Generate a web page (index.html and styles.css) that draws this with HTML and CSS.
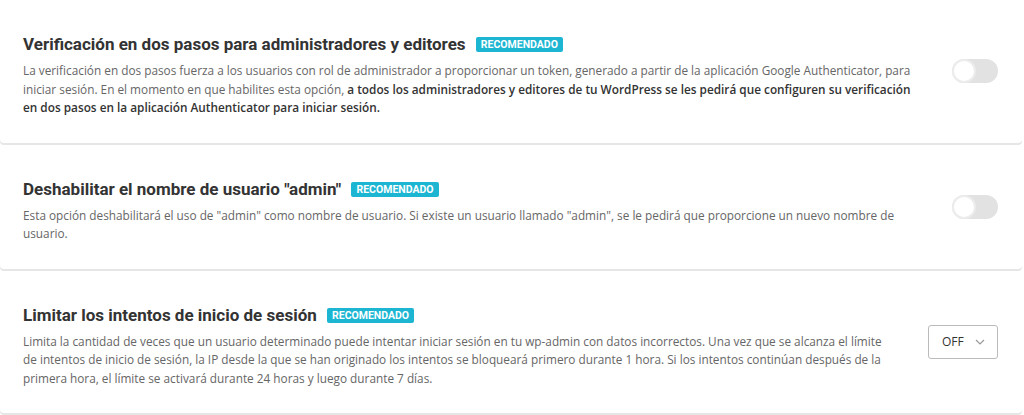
FILE: index.html
```html
<!DOCTYPE html>
<html lang="es">
<head>
    <meta charset="UTF-8">
    <meta name="viewport" content="width=device-width, initial-scale=1.0">
    <title>Seguridad - Ajustes</title>
    <link rel="stylesheet" href="styles.css">
</head>
<body>
    <div class="settings">

        <div class="box">
            <div class="box-text">
                <h3 class="box-title">Verificación en dos pasos para administradores y editores <span class="tag">Recomendado</span></h3>
                <p>La verificación en dos pasos fuerza a los usuarios con rol de administrador a proporcionar un token, generado a partir de la aplicación Google Authenticator, para iniciar sesión. En el momento en que habilites esta opción, <strong>a todos los administradores y editores de tu WordPress se les pedirá que configuren su verificación en dos pasos en la aplicación Authenticator para iniciar sesión.</strong></p>
            </div>
            <div class="box-control">
                <label class="toggle"><input type="checkbox"><span class="slider"></span></label>
            </div>
        </div>

        <div class="box">
            <div class="box-text">
                <h3 class="box-title">Deshabilitar el nombre de usuario "admin" <span class="tag">Recomendado</span></h3>
                <p>Esta opción deshabilitará el uso de "admin" como nombre de usuario. Si existe un usuario llamado "admin", se le pedirá que proporcione un nuevo nombre de usuario.</p>
            </div>
            <div class="box-control">
                <label class="toggle"><input type="checkbox"><span class="slider"></span></label>
            </div>
        </div>

        <div class="box">
            <div class="box-text">
                <h3 class="box-title">Limitar los intentos de inicio de sesión <span class="tag">Recomendado</span></h3>
                <p>Limita la cantidad de veces que un usuario determinado puede intentar iniciar sesión en tu wp-admin con datos incorrectos. Una vez que se alcanza el límite de intentos de inicio de sesión, la IP desde la que se han originado los intentos se bloqueará primero durante 1 hora. Si los intentos continúan después de la primera hora, el límite se activará durante 24 horas y luego durante 7 días.</p>
            </div>
            <div class="box-control">
                <div class="select">
                    <span>OFF</span>
                    <svg width="10" height="6" viewBox="0 0 10 6"><path d="M1 1l4 4 4-4" fill="none" stroke="#999" stroke-width="1.2"/></svg>
                </div>
            </div>
        </div>

    </div>
</body>
</html>
```

FILE: styles.css
```css
body {
    margin: 0;
    background: #fff;
    font-family: 'Open Sans', sans-serif;
    color: #666;
}
.settings {
    width: 1022px;
}
.box {
    display: flex;
    align-items: center;
    padding: 0 24px 0 23px;
    background: #fff;
    border-radius: 0 0 4px 4px;
    box-shadow: 0 2px 0 #e6e6e6;
    margin-bottom: 2px;
}
.box-text {
    flex: 1;
    padding: 33px 0 26px;
}
.box-title {
    margin: 0 0 6px;
    font-family: Roboto, sans-serif;
    font-weight: 700;
    font-size: 17px;
    line-height: 22px;
    color: #333;
}
.tag {
    display: inline-block;
    vertical-align: 2px;
    margin-left: 6px;
    padding: 0 5px;
    background: #1cb5d2;
    color: #fff;
    border-radius: 2px;
    font-size: 10.5px;
    line-height: 15px;
    text-transform: uppercase;
}
.box-text p {
    margin: 0;
    font-size: 11.8px;
    line-height: 18.5px;
    color: #666;
}
.box-text strong {
    color: #333;
    font-weight: 600;
}
.box-control {
    flex: none;
    margin-left: 36px;
}
.toggle {
    position: relative;
    display: block;
    width: 46px;
    height: 24px;
}
.toggle input {
    display: none;
}
.slider {
    position: absolute;
    inset: 0;
    background: #e2e2e2;
    border-radius: 12px;
}
.slider::before {
    content: "";
    position: absolute;
    left: 0;
    top: 0;
    width: 20px;
    height: 20px;
    border: 2px solid #ececec;
    border-radius: 50%;
    background: #fff;
}
.select {
    display: flex;
    align-items: center;
    justify-content: space-between;
    box-sizing: border-box;
    width: 70px;
    height: 34px;
    padding: 0 12px 0 13px;
    border: 1px solid #bbb;
    border-radius: 3px;
    font-size: 12px;
    color: #333;
}
```
